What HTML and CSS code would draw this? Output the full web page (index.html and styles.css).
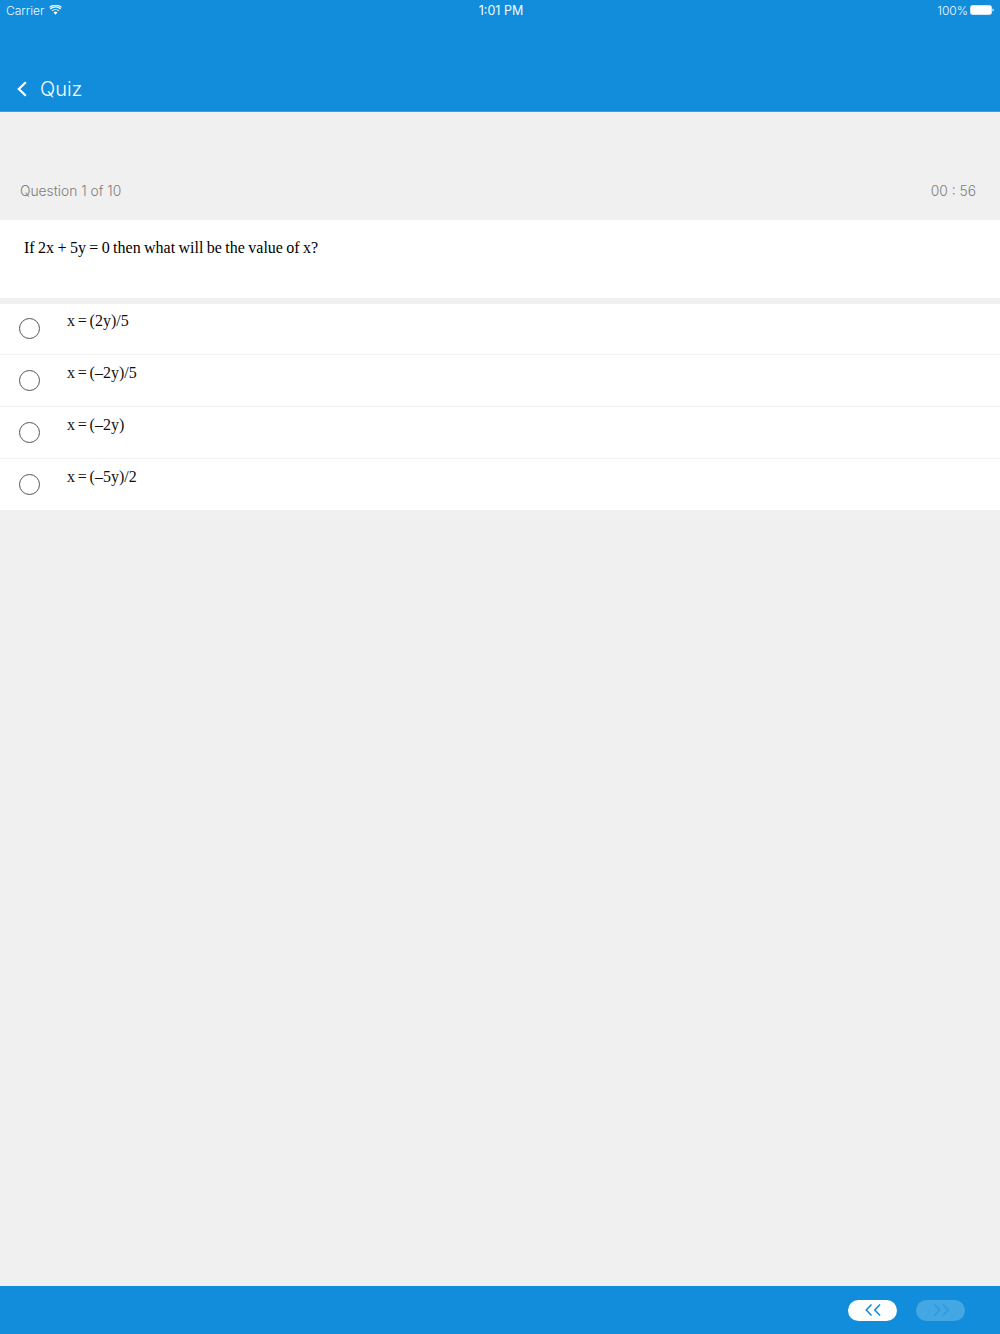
FILE: index.html
```html
<!DOCTYPE html>
<html lang="en">
<head>
<meta charset="utf-8">
<title>Quiz</title>
<link rel="stylesheet" href="styles.css">
</head>
<body>
<div class="app">
  <header class="header">
    <div class="status">
      <div class="status-left">
        <span>Carrier</span>
        <svg class="wifi" width="13" height="10" viewBox="0 0 14 10"><path d="M7 10 4.9 7.6a3 3 0 0 1 4.2 0Z" fill="#fff"/><path d="M3.4 5.9a5.2 5.2 0 0 1 7.2 0M1.5 3.9a8 8 0 0 1 11 0M.6 2.200a9.800 9.800 0 0 1 12.800 0" fill="none" stroke="#fff" stroke-width="1.3"/></svg>
      </div>
      <div class="status-time">1:01 PM</div>
      <div class="status-right">
        <span>100%</span>
        <svg class="battery" width="24" height="10" viewBox="0 0 24 10"><rect x=".5" y=".5" width="21" height="9" rx="2" fill="#fff" stroke="#cfe6f7"/><path d="M22.500 3.500c.8.2 1.200.8 1.200 1.500s-.4 1.300-1.200 1.500Z" fill="#fff"/></svg>
      </div>
    </div>
    <div class="nav">
      <svg class="back" width="12" height="16" viewBox="0 0 12 16"><path d="M9.800 1.200 2.800 8l7 6.800" fill="none" stroke="#fff" stroke-width="2.200"/></svg>
      <span class="nav-title">Quiz</span>
    </div>
  </header>
  <main class="main">
    <div class="meta">
      <span>Question 1 of 10</span>
      <span>00 : 56</span>
    </div>
    <div class="question">If 2x + 5y = 0 then what will be the value of x?</div>
    <ul class="options">
      <li class="option"><span class="radio"></span><span class="option-text">x = (2y)/5</span></li>
      <li class="option"><span class="radio"></span><span class="option-text">x = (–2y)/5</span></li>
      <li class="option"><span class="radio"></span><span class="option-text">x = (–2y)</span></li>
      <li class="option"><span class="radio"></span><span class="option-text">x = (–5y)/2</span></li>
    </ul>
  </main>
  <footer class="footer">
    <div class="pill">
      <svg width="18" height="14" viewBox="0 0 18 14"><path d="M7.500 1.500 2.300 7l5.200 5.500M16 1.500 10.800 7l5.200 5.500" fill="none" stroke="#128ddb" stroke-width="1.600"/></svg>
    </div>
    <div class="pill pill-off">
      <svg width="18" height="14" viewBox="0 0 18 14"><path d="M2.500 1.500 7.700 7l-5.200 5.500M11 1.500 16.200 7 11 12.500" fill="none" stroke="#2e9be0" stroke-width="1.600"/></svg>
    </div>
  </footer>
</div>
</body>
</html>
```
FILE: styles.css
```css
* { box-sizing: border-box; }
html, body { margin: 0; padding: 0; }
body { background: #f0f0f0; font-family: Inter, Roboto, "Liberation Sans", sans-serif; }
.app { width: 1000px; height: 1334px; display: flex; flex-direction: column; }

.header { height: 112px; background: #128ddb; color: #fff; display: flex; flex-direction: column; border-bottom: 1px solid #3d9fde; }
.status { height: 20px; padding: 0 6px; display: grid; grid-template-columns: 1fr auto 1fr; align-items: center; font-size: 12px; font-weight: 300; color: #f2f9fe; }
.status-left { display: flex; align-items: center; gap: 5px; }
.status-time { padding-left: 2px; font-size: 12.5px; font-weight: 400; }
.status-right { display: flex; align-items: center; justify-content: flex-end; gap: 2px; }
.wifi, .battery { display: block; }

.nav { flex: 1; display: flex; align-items: flex-end; padding: 0 0 8px 16px; gap: 12px; }
.back { margin-bottom: 6px; }
.nav-title { font-size: 20px; font-weight: 300; line-height: 28px; color: #f7fbfe; }

.main { flex: 1; display: flex; flex-direction: column; }
.meta { height: 108px; padding: 0 24px 20px 20px; display: flex; justify-content: space-between; align-items: flex-end; font-size: 13.8px; font-weight: 300; line-height: 17px; color: #7e7e7e; }

.question { height: 78px; background: #fff; padding: 18px 24px 0; font-family: "Liberation Serif", serif; font-size: 16px; word-spacing: -0.6px; line-height: 19px; color: #000; margin-bottom: 5px; }

.options { list-style: none; margin: 0; padding: 0; }
.option { height: 52px; background: #fff; border-bottom: 1px solid #f2f2f2; display: flex; padding-left: 19px; }
.option:first-child { box-shadow: inset 0 1px 0 #f0f0f0; }
.option:last-child { border-bottom-color: #f0f0f0; }
.radio { width: 21px; height: 21px; margin-top: 15px; border: 1.500px solid #555; border-radius: 50%; background: #fff; }
.option-text { margin: 9px 0 0 27px; font-family: "Liberation Serif", serif; font-size: 16px; word-spacing: -1.2px; line-height: 18px; color: #111; }

.footer { height: 48px; background: #128ddb; display: flex; justify-content: flex-end; align-items: center; gap: 19px; padding: 0 35px 0 0; }
.pill { width: 49px; height: 21px; border-radius: 11px; background: #fff; display: flex; align-items: center; justify-content: center; }
.pill-off { background: #42a7e3; }
```
